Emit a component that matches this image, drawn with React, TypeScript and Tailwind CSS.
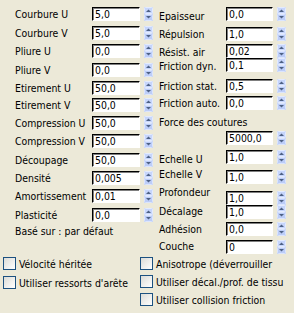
import React from "react";

type Row = { label?: string; value: string; mt: string; lmt?: string };

const leftRows: Row[] = [
  { label: "Courbure U", value: "5,0", mt: "mt-[7px]" },
  { label: "Courbure V", value: "5,0", mt: "mt-[5px]" },
  { label: "Pliure U", value: "0,0", mt: "mt-[4px]" },
  { label: "Pliure V", value: "0,0", mt: "mt-[5px]" },
  { label: "Etirement U", value: "50,0", mt: "mt-[4px]" },
  { label: "Etirement V", value: "50,0", mt: "mt-[3px]" },
  { label: "Compression U", value: "50,0", mt: "mt-[4px]" },
  { label: "Compression V", value: "50,0", mt: "mt-[4px]" },
  { label: "Découpage", value: "50,0", mt: "mt-[5px]" },
  { label: "Densité", value: "0,005", mt: "mt-[4px]" },
  { label: "Amortissement", value: "0,01", mt: "mt-[4px]" },
  { label: "Plasticité", value: "0,0", mt: "mt-[5px]" },
];

const rightTop: Row[] = [
  { label: "Epaisseur", value: "0,0", mt: "mt-[7px]", lmt: "mt-[2px]" },
  { label: "Répulsion", value: "1,0", mt: "mt-[6px]", lmt: "mt-0" },
  { label: "Résist. air", value: "0,02", mt: "mt-[3px]", lmt: "mt-[1px]" },
  { label: "Friction dyn.", value: "0,1", mt: "mt-0", lmt: "mt-[1px]" },
  { label: "Friction stat.", value: "0,5", mt: "mt-[7px]", lmt: "mt-0" },
  { label: "Friction auto.", value: "0,0", mt: "mt-[3px]", lmt: "mt-0" },
];

const rightBottom: Row[] = [
  { label: "", value: "5000,0", mt: "mt-[2px]", lmt: "mt-0" },
  { label: "Echelle U", value: "1,0", mt: "mt-[5px]", lmt: "mt-[2px]" },
  { label: "Echelle V", value: "1,0", mt: "mt-[6px]", lmt: "-mt-[3px]" },
  { label: "Profondeur", value: "1,0", mt: "mt-[7px]", lmt: "-mt-[6px]" },
  { label: "Décalage", value: "1,0", mt: "mt-0", lmt: "-mt-[1px]" },
  { label: "Adhésion", value: "0,0", mt: "mt-[3px]", lmt: "mt-0" },
  { label: "Couche", value: "0", mt: "mt-[4px]", lmt: "-mt-[1px]" },
];

function Spinner() {
  return (
    <svg width="9" height="14" viewBox="0 0 9 14" className="block shrink-0">
      <rect x="0" y="0" width="9" height="7" rx="1" fill="#c6d5fb" />
      <rect x="0" y="7" width="9" height="7" rx="1" fill="#bccdf8" />
      <rect x="0.5" y="0.5" width="8" height="6" rx="1" fill="none" stroke="#e3ebff" />
      <rect x="0.5" y="7.5" width="8" height="6" rx="1" fill="none" stroke="#dbe5fe" />
      <path d="M2 5 L4.5 2.5 L7 5 Z" fill="#4d6185" />
      <path d="M2 9 L4.5 11.5 L7 9 Z" fill="#4d6185" />
    </svg>
  );
}

function NumBox({ value, w }: { value: string; w: string }) {
  return (
    <div
      className={`${w} h-[14px] shrink-0 bg-white border-t border-l border-t-[#000] border-l-[#000] border-r border-b border-r-[#ffffff] border-b-[#ffffff] shadow-[inset_1px_1px_0_#7f7f7f] pl-[2px] leading-[12px] text-[#000] whitespace-nowrap overflow-hidden`}
    >
      {value}
    </div>
  );
}

function Checkbox({ label }: { label: string }) {
  return (
    <div className="flex items-center h-[13px]">
      <div className="w-[13px] h-[13px] shrink-0 border border-[#1c5180] bg-linear-to-br from-[#dcdcd7] to-[#ffffff]" />
      <span className="ml-[3px] whitespace-nowrap leading-[14px]">{label}</span>
    </div>
  );
}

export default function App() {
  return (
    <div className="w-[294px] h-[313px] bg-[#ece9d8] text-[#000] text-[10.4px] font-['DejaVu_Sans',sans-serif] font-stretch-condensed overflow-hidden">
      <div className="flex items-start">
        <div className="w-[155px] flex flex-col pl-[15px] shrink-0">
          {leftRows.map((r) => (
            <div key={r.label} className={`${r.mt} flex items-start h-[14px]`}>
              <span className="w-[77px] shrink-0 leading-[14px] whitespace-nowrap">{r.label}</span>
              <NumBox value={r.value} w="w-[48px]" />
              <div className="ml-[4px]">
                <Spinner />
              </div>
            </div>
          ))}
          <div className="mt-[2px] leading-[14px] h-[14px] whitespace-nowrap">Basé sur : par défaut</div>
        </div>
        <div className="flex flex-col pl-[4px]">
          {rightTop.map((r) => (
            <div key={r.label} className={`${r.mt} flex items-start h-[14px]`}>
              <span className={`w-[67px] shrink-0 ${r.lmt} leading-[14px] whitespace-nowrap`}>{r.label}</span>
              <NumBox value={r.value} w="w-[47px]" />
              <div className="ml-[4px]">
                <Spinner />
              </div>
            </div>
          ))}
          <div className="mt-[5px] h-[14px] leading-[14px] whitespace-nowrap">Force des coutures</div>
          {rightBottom.map((r) => (
            <div key={r.value + r.label} className={`${r.mt} flex items-start h-[14px]`}>
              <span className={`w-[67px] shrink-0 ${r.lmt} leading-[14px] whitespace-nowrap`}>{r.label}</span>
              <NumBox value={r.value} w="w-[47px]" />
              <div className="ml-[4px]">
                <Spinner />
              </div>
            </div>
          ))}
        </div>
      </div>
      <div className="flex mt-[3px]">
        <div className="w-[140px] pl-[3px] flex flex-col gap-[6px] shrink-0">
          <Checkbox label="Vélocité héritée" />
          <Checkbox label="Utiliser ressorts d'arête" />
        </div>
        <div className="flex flex-col gap-[5px]">
          <Checkbox label="Anisotrope (déverrouiller" />
          <Checkbox label="Utiliser décal./prof. de tissu" />
          <Checkbox label="Utiliser collision friction" />
        </div>
      </div>
    </div>
  );
}
